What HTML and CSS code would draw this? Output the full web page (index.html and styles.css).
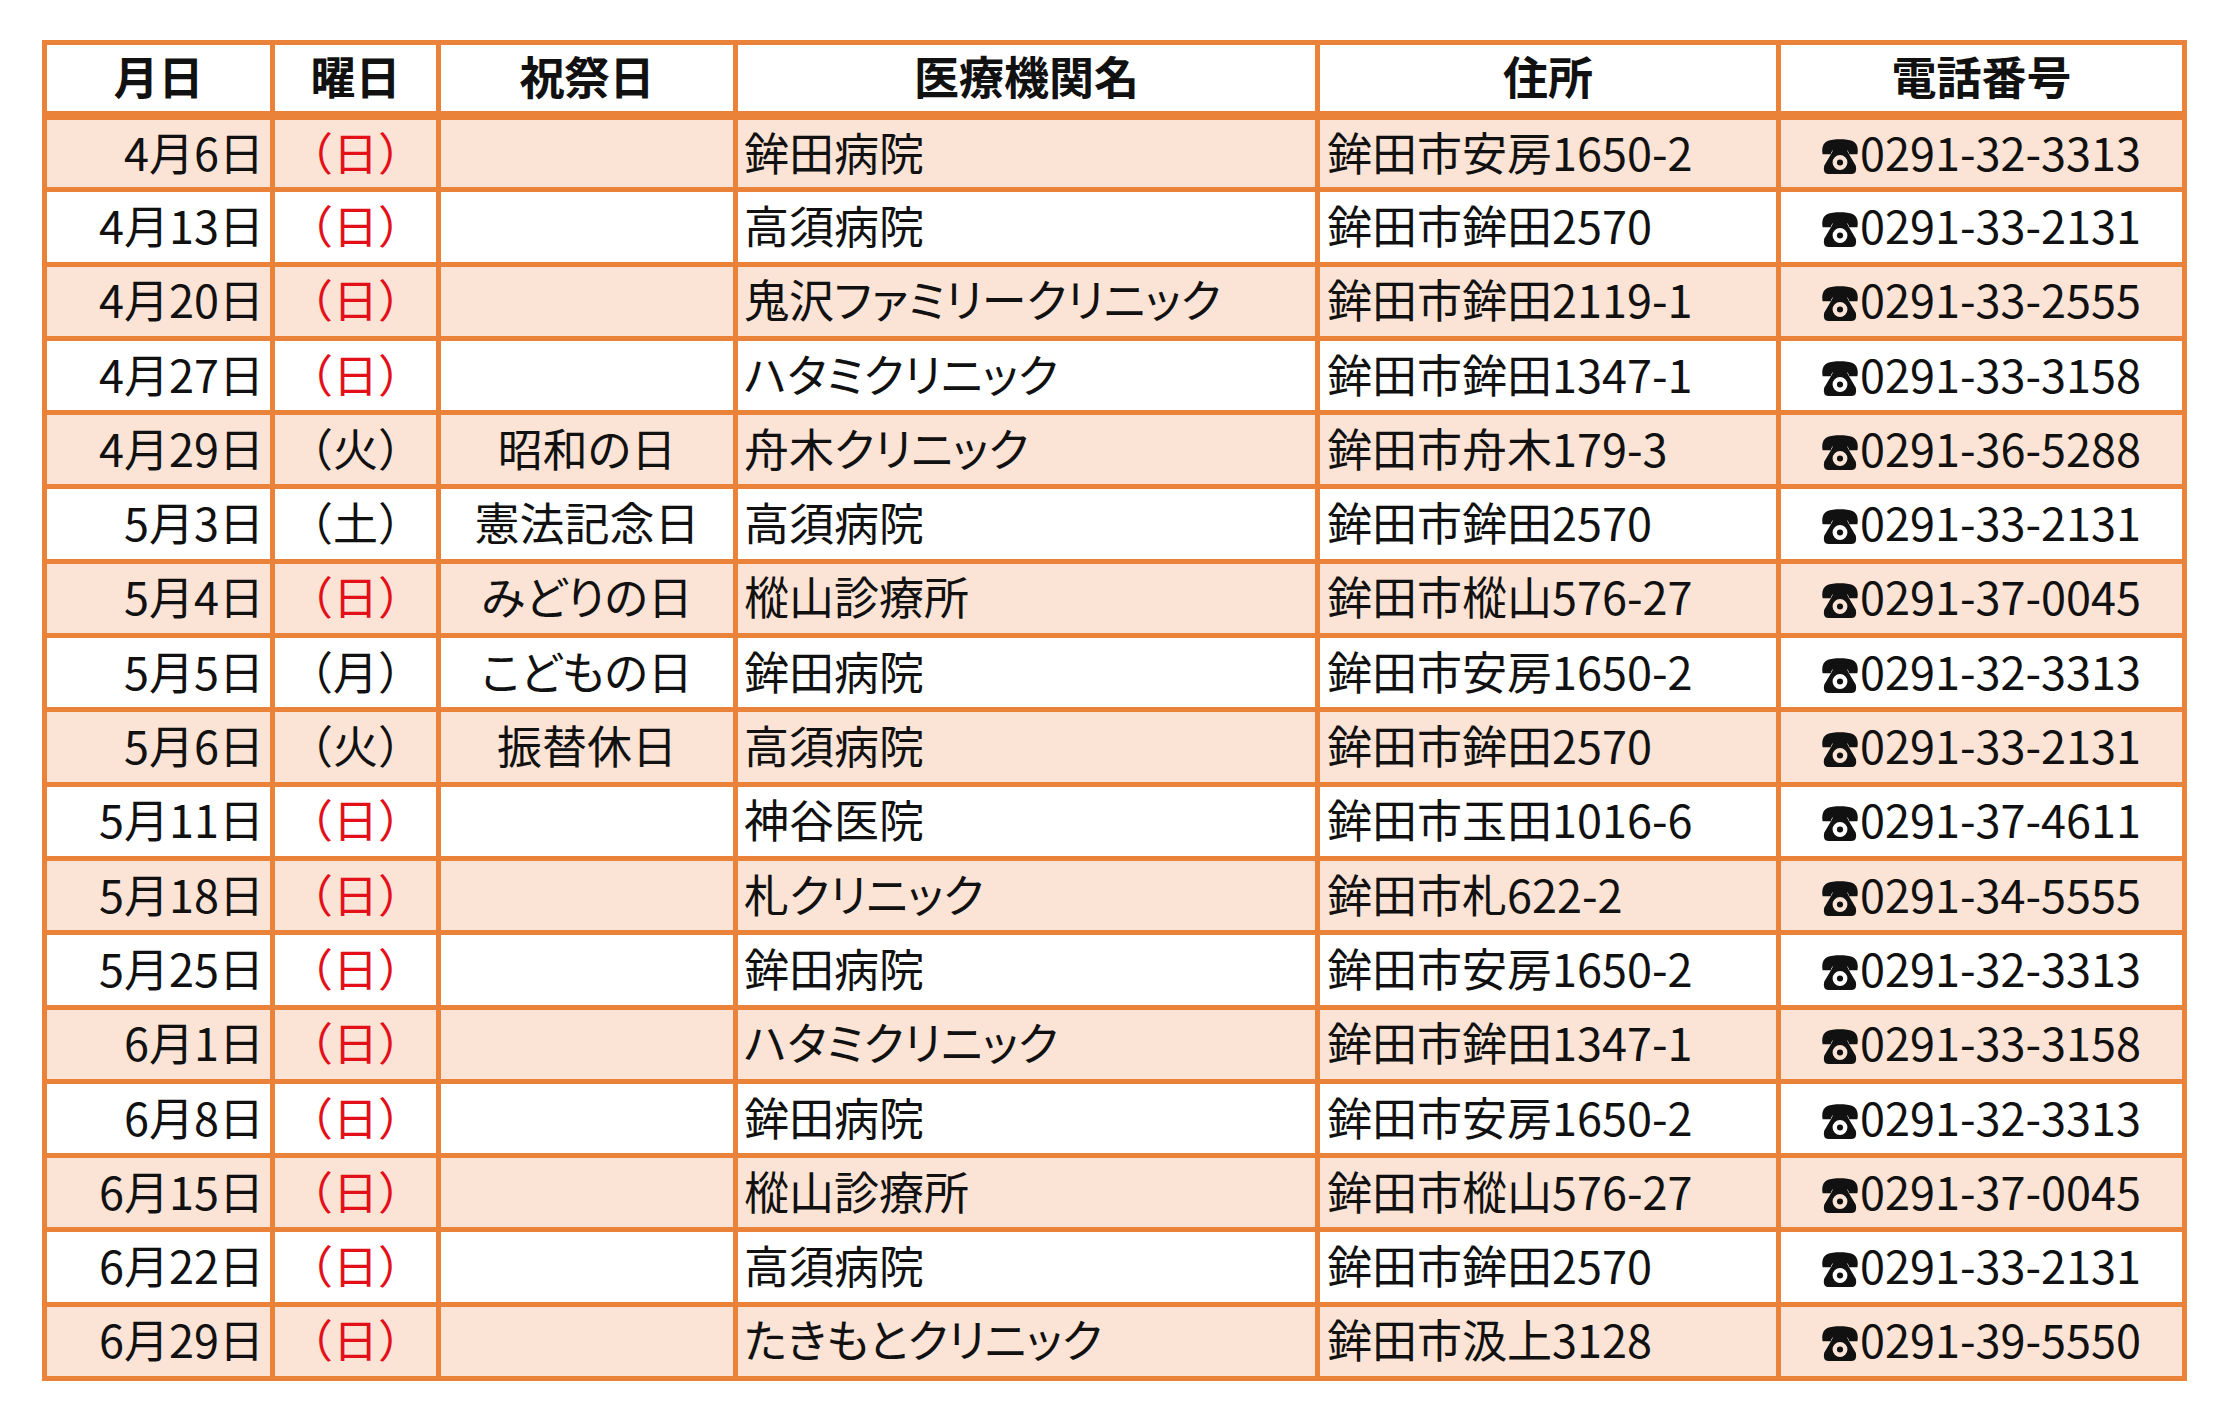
FILE: index.html
```html
<!DOCTYPE html>
<html lang="ja">
<head>
<meta charset="utf-8">
<title>休日当番医</title>
<link rel="stylesheet" href="styles.css">
</head>
<body>
<svg class="defs" width="0" height="0" aria-hidden="true">
  <symbol id="tel" viewBox="0 0 33 32">
    <path d="M0.6 14 C-0.6 8 1 3.5 5 1.8 C10 -0.3 23 -0.3 28 1.8 C32 3.5 33.6 8 32.4 14 L25 14 C24.5 11.5 23.5 10 22 10 L11 10 C9.5 10 8.5 11.5 8 14 Z"/>
    <path fill-rule="evenodd" d="M10.5 9.5 L22.5 9.5 L24.5 13.5 L31 24.5 Q32.6 32 27 32 L6 32 Q0.4 32 2 24.5 L8.5 13.5 Z M9.7 21.5 a6.8 6.8 0 1 0 13.6 0 a6.8 6.8 0 1 0 -13.6 0 Z"/>
    <circle cx="16.5" cy="21.5" r="2.8"/>
  </symbol>
</svg>
<div class="page">
<table class="schedule">
  <colgroup>
    <col class="c-date"><col class="c-wd"><col class="c-hol"><col class="c-name"><col class="c-addr"><col class="c-tel">
  </colgroup>
  <thead>
    <tr><th>月日</th><th>曜日</th><th>祝祭日</th><th>医療機関名</th><th>住所</th><th>電話番号</th></tr>
  </thead>
  <tbody>
    <tr><td class="date">4月6日</td><td class="wd sun">（日）</td><td class="hol"></td><td class="name">鉾田病院</td><td class="addr">鉾田市安房1650-2</td><td class="tel"><svg class="ico" width="36" height="35"><use href="#tel"/></svg>0291-32-3313</td></tr>
    <tr><td class="date">4月13日</td><td class="wd sun">（日）</td><td class="hol"></td><td class="name">高須病院</td><td class="addr">鉾田市鉾田2570</td><td class="tel"><svg class="ico" width="36" height="35"><use href="#tel"/></svg>0291-33-2131</td></tr>
    <tr><td class="date">4月20日</td><td class="wd sun">（日）</td><td class="hol"></td><td class="name">鬼沢ファミリークリニック</td><td class="addr">鉾田市鉾田2119-1</td><td class="tel"><svg class="ico" width="36" height="35"><use href="#tel"/></svg>0291-33-2555</td></tr>
    <tr><td class="date">4月27日</td><td class="wd sun">（日）</td><td class="hol"></td><td class="name">ハタミクリニック</td><td class="addr">鉾田市鉾田1347-1</td><td class="tel"><svg class="ico" width="36" height="35"><use href="#tel"/></svg>0291-33-3158</td></tr>
    <tr><td class="date">4月29日</td><td class="wd">（火）</td><td class="hol">昭和の日</td><td class="name">舟木クリニック</td><td class="addr">鉾田市舟木179-3</td><td class="tel"><svg class="ico" width="36" height="35"><use href="#tel"/></svg>0291-36-5288</td></tr>
    <tr><td class="date">5月3日</td><td class="wd">（土）</td><td class="hol">憲法記念日</td><td class="name">高須病院</td><td class="addr">鉾田市鉾田2570</td><td class="tel"><svg class="ico" width="36" height="35"><use href="#tel"/></svg>0291-33-2131</td></tr>
    <tr><td class="date">5月4日</td><td class="wd sun">（日）</td><td class="hol">みどりの日</td><td class="name">樅山診療所</td><td class="addr">鉾田市樅山576-27</td><td class="tel"><svg class="ico" width="36" height="35"><use href="#tel"/></svg>0291-37-0045</td></tr>
    <tr><td class="date">5月5日</td><td class="wd">（月）</td><td class="hol">こどもの日</td><td class="name">鉾田病院</td><td class="addr">鉾田市安房1650-2</td><td class="tel"><svg class="ico" width="36" height="35"><use href="#tel"/></svg>0291-32-3313</td></tr>
    <tr><td class="date">5月6日</td><td class="wd">（火）</td><td class="hol">振替休日</td><td class="name">高須病院</td><td class="addr">鉾田市鉾田2570</td><td class="tel"><svg class="ico" width="36" height="35"><use href="#tel"/></svg>0291-33-2131</td></tr>
    <tr><td class="date">5月11日</td><td class="wd sun">（日）</td><td class="hol"></td><td class="name">神谷医院</td><td class="addr">鉾田市玉田1016-6</td><td class="tel"><svg class="ico" width="36" height="35"><use href="#tel"/></svg>0291-37-4611</td></tr>
    <tr><td class="date">5月18日</td><td class="wd sun">（日）</td><td class="hol"></td><td class="name">札クリニック</td><td class="addr">鉾田市札622-2</td><td class="tel"><svg class="ico" width="36" height="35"><use href="#tel"/></svg>0291-34-5555</td></tr>
    <tr><td class="date">5月25日</td><td class="wd sun">（日）</td><td class="hol"></td><td class="name">鉾田病院</td><td class="addr">鉾田市安房1650-2</td><td class="tel"><svg class="ico" width="36" height="35"><use href="#tel"/></svg>0291-32-3313</td></tr>
    <tr><td class="date">6月1日</td><td class="wd sun">（日）</td><td class="hol"></td><td class="name">ハタミクリニック</td><td class="addr">鉾田市鉾田1347-1</td><td class="tel"><svg class="ico" width="36" height="35"><use href="#tel"/></svg>0291-33-3158</td></tr>
    <tr><td class="date">6月8日</td><td class="wd sun">（日）</td><td class="hol"></td><td class="name">鉾田病院</td><td class="addr">鉾田市安房1650-2</td><td class="tel"><svg class="ico" width="36" height="35"><use href="#tel"/></svg>0291-32-3313</td></tr>
    <tr><td class="date">6月15日</td><td class="wd sun">（日）</td><td class="hol"></td><td class="name">樅山診療所</td><td class="addr">鉾田市樅山576-27</td><td class="tel"><svg class="ico" width="36" height="35"><use href="#tel"/></svg>0291-37-0045</td></tr>
    <tr><td class="date">6月22日</td><td class="wd sun">（日）</td><td class="hol"></td><td class="name">高須病院</td><td class="addr">鉾田市鉾田2570</td><td class="tel"><svg class="ico" width="36" height="35"><use href="#tel"/></svg>0291-33-2131</td></tr>
    <tr><td class="date">6月29日</td><td class="wd sun">（日）</td><td class="hol"></td><td class="name">たきもとクリニック</td><td class="addr">鉾田市汲上3128</td><td class="tel"><svg class="ico" width="36" height="35"><use href="#tel"/></svg>0291-39-5550</td></tr>
  </tbody>
</table>
</div>
</body>
</html>
```

FILE: styles.css
```css
html, body {
  margin: 0;
  padding: 0;
  background: #ffffff;
}

.defs {
  position: absolute;
  width: 0;
  height: 0;
  overflow: hidden;
}

.page {
  padding: 40px 0 0 42px;
}

.schedule {
  width: 2145px;
  table-layout: fixed;
  border-collapse: collapse;
  border: 5px solid #EA8239;
  font-family: "Noto Sans CJK JP", "Noto Sans", sans-serif;
  font-size: 45px;
  color: #111111;
}

.c-date { width: 228px; }
.c-wd   { width: 166px; }
.c-hol  { width: 297px; }
.c-name { width: 582px; }
.c-addr { width: 461px; }
.c-tel  { width: 406px; }

.schedule th,
.schedule td {
  border: 5px solid #EA8239;
  padding: 0 0 5px 0;
  line-height: 1;
  white-space: nowrap;
  overflow: hidden;
}

.schedule thead tr {
  height: 73px;
}

.schedule th {
  font-weight: 700;
  text-align: center;
  border-bottom-width: 9px;
  background: #ffffff;
}

.schedule tbody tr {
  height: 74.3px;
  background: #ffffff;
}

.schedule tbody tr:nth-child(odd) {
  background: #FBE3D5;
}

.schedule .date {
  text-align: right;
  padding-right: 6px;
}

.wd {
  text-align: center;
}

.wd.sun {
  color: #E3101A;
}

.hol {
  text-align: center;
  font-feature-settings: "palt";
}

.schedule .name {
  text-align: left;
  padding-left: 6px;
  font-feature-settings: "palt";
}

.schedule .addr {
  text-align: left;
  padding-left: 7px;
}

.tel {
  text-align: center;
}

.ico {
  display: inline-block;
  width: 36px;
  height: 35px;
  fill: #111111;
  vertical-align: -3px;
  margin-right: 2px;
}
```
